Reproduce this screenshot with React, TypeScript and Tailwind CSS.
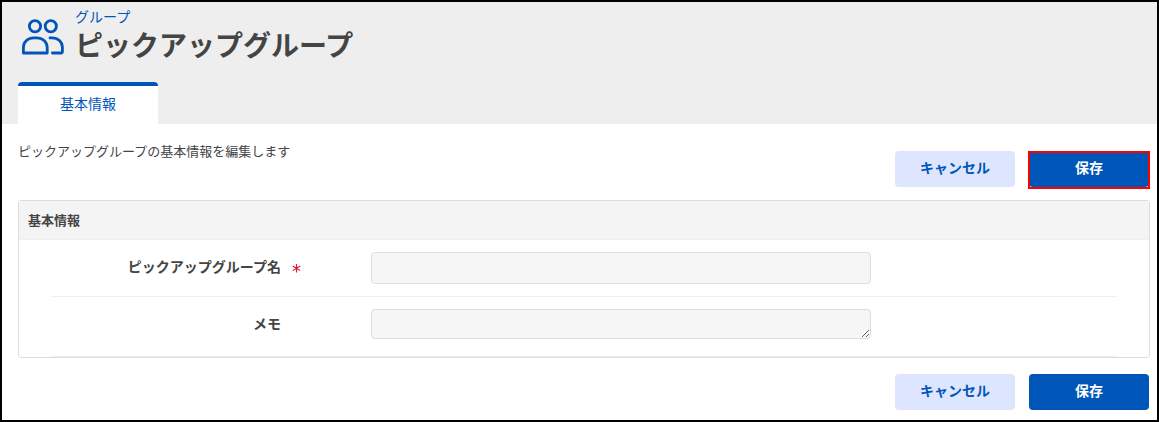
import type { ReactNode } from 'react';

function GroupIcon() {
  return (
    <svg width="42" height="36" viewBox="0 0 42 36" fill="none" stroke="#0056b8" strokeWidth="2.8" strokeLinecap="round" strokeLinejoin="round" aria-hidden="true">
      <circle cx="13" cy="7.3" r="5.6" />
      <circle cx="28.8" cy="7.3" r="5.6" />
      <path d="M1.4 34V28.6C1.4 22.8 6 18.9 11.8 18.9H14.6C20.4 18.9 25.2 22.8 25.2 28.6V34Z" />
      <path d="M28 18.9H30C35.9 18.9 40.4 22.8 40.4 28.6V32.5C40.4 33.4 39.8 34 38.9 34H30.4" />
    </svg>
  );
}

function Actions({ highlight = false }: { highlight?: boolean }) {
  return (
    <div className="flex gap-3.5 pr-px">
      <button type="button" className="h-9 w-[120px] rounded-sm bg-[#dee6ff] pb-1 text-sm font-bold text-[#0056b8]">
        キャンセル
      </button>
      <div className="relative">
        <button type="submit" className="h-9 w-[120px] rounded-sm bg-[#0056b8] pb-1 text-sm font-bold text-white">
          保存
        </button>
        {highlight && <span className="pointer-events-none absolute -inset-x-px top-0 -bottom-0.5 border-2 border-[#ff0000]" />}
      </div>
    </div>
  );
}

function Field({ id, label, required = false, children }: { id: string; label: string; required?: boolean; children: ReactNode }) {
  return (
    <div className="flex min-h-[57px] items-start border-b border-[#eee] pt-3">
      <label htmlFor={id} className="w-[230px] shrink-0 pt-1 text-right text-sm leading-5 font-bold">
        {label}
      </label>
      <div className="w-[90px] shrink-0 pt-3 pl-[11px]">
        {required && (
          <svg width="9" height="9" viewBox="0 0 9 9" stroke="#e0142d" strokeWidth="1.1" aria-hidden="true">
            <path d="M4.5 0V8.5M0.8 2L8.2 6.6M8.2 2L0.8 6.6" />
          </svg>
        )}
      </div>
      {children}
    </div>
  );
}

export default function App() {
  return (
    <div className="border-2 border-black bg-white font-['Noto_Sans_CJK_JP',sans-serif] text-[#444]">
      <header className="bg-[#eee] pl-4">
        <div className="flex h-20 items-start pl-1">
          <div className="pt-[17px]">
            <GroupIcon />
          </div>
          <div className="pt-1 pl-[11px]">
            <p className="text-sm leading-5 text-[#0056b8]">グループ</p>
            <h1 className="text-[28px] leading-9 font-bold">ピックアップグループ</h1>
          </div>
        </div>
        <nav className="flex">
          <a href="#basic" className="flex h-[42px] w-[140px] items-center justify-center rounded-t-sm border-t-4 border-[#0056b8] bg-white pb-1 text-sm text-[#0056b8]">
            基本情報
          </a>
        </nav>
      </header>

      <form className="pr-[7px] pb-2.5 pl-4">
        <div className="flex items-start justify-between pt-[17px] pb-[13px]">
          <p className="text-[13px] leading-5">ピックアップグループの基本情報を編集します</p>
          <div className="pt-2.5">
            <Actions highlight />
          </div>
        </div>

        <section id="basic" className="rounded-[3px] border border-[#ddd]">
          <h2 className="border-b border-[#eee] bg-[#f4f4f4] px-[9px] py-[9px] text-[13px] leading-5 font-bold">基本情報</h2>
          <div className="px-8">
            <Field id="group-name" label="ピックアップグループ名" required>
              <input id="group-name" type="text" required className="h-8 w-[500px] rounded-sm border border-[#ddd] bg-[#f6f6f6] px-2 text-sm" />
            </Field>
            <Field id="memo" label="メモ">
              <textarea id="memo" rows={1} className="mb-[17px] block h-[30px] w-[500px] rounded-sm border border-[#ddd] bg-[#f6f6f6] px-2 py-1 text-sm" />
            </Field>
          </div>
        </section>

        <div className="flex justify-end pt-4">
          <Actions />
        </div>
      </form>
    </div>
  );
}
